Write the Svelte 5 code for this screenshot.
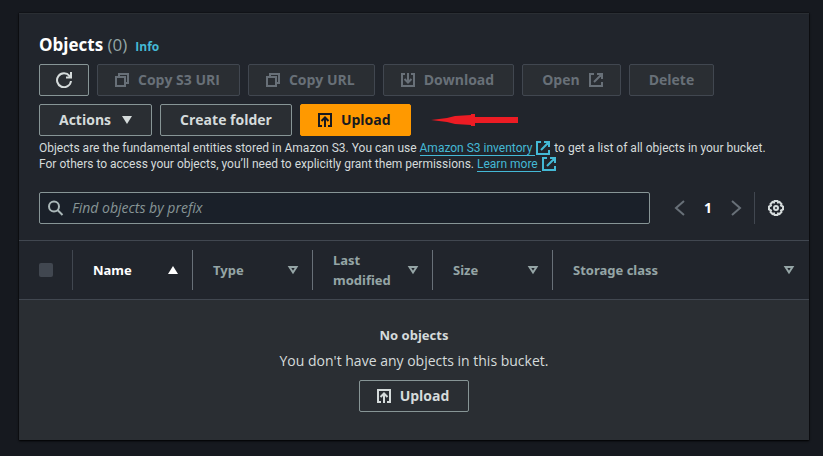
<script>
  let query = $state('');
  const columns = [
    { label: 'Name', sorted: true },
    { label: 'Type' },
    { label: 'Last modified' },
    { label: 'Size' },
    { label: 'Storage class' }
  ];
</script>

{#snippet copyIcon()}
  <svg class="icon" viewBox="0 0 16 16" aria-hidden="true"><path d="M2 5h9v9H2zM5 5V2h9v9h-3" /></svg>
{/snippet}
{#snippet downloadIcon()}
  <svg class="icon" viewBox="0 0 16 16" aria-hidden="true"><path d="M5 2H2v12h12V2h-3M8 1v9.500M4.500 7L8 10.500 11.500 7" /></svg>
{/snippet}
{#snippet uploadIcon()}
  <svg class="icon" viewBox="0 0 16 16" aria-hidden="true"><path d="M5 14H2V2h12v12h-3M8 15V6M4.500 9L8 5.500 11.500 9" /></svg>
{/snippet}
{#snippet externalIcon()}
  <svg class="icon" viewBox="0 0 16 16" aria-hidden="true"><path d="M6 2H2v12h12v-4M9 2h5v5M14 2L6 10" /></svg>
{/snippet}

<main>
  <section class="panel">
    <header>
      <div class="title">
        <h2>Objects <span>(0)</span></h2>
        <a class="info" href="#info">Info</a>
      </div>
      <div class="toolbar">
        <button class="btn refresh" aria-label="Refresh">
          <svg class="icon" viewBox="0 0 16 16" aria-hidden="true"><path d="M15 9A7 7 0 1 1 13.500 3.800L15 5.500M15 0v5.500h-5" /></svg>
        </button>
        <button class="btn lead" disabled>{@render copyIcon()}Copy S3 URI</button>
        <button class="btn lead" disabled>{@render copyIcon()}Copy URL</button>
        <button class="btn lead" disabled>{@render downloadIcon()}Download</button>
        <button class="btn trail" disabled>Open{@render externalIcon()}</button>
        <button class="btn" disabled>Delete</button>
        <button class="btn trail">Actions
          <svg class="icon" viewBox="0 0 16 16" aria-hidden="true"><path class="fill" d="M3 4h10l-5 8z" /></svg>
        </button>
        <button class="btn">Create folder</button>
        <button class="btn lead primary">{@render uploadIcon()}Upload</button>
        <svg class="arrow" viewBox="0 0 87 12" aria-hidden="true"><path d="M0 6L16 4 24 2 40 1V0h4v3h43v6H44v3h-4v-1L24 10 16 8z" /></svg>
      </div>
      <p class="description">
        Objects are the fundamental entities stored in Amazon S3. You can use
        <a href="#inventory"><span>Amazon S3 inventory&nbsp;</span>{@render externalIcon()}</a>
        to get a list of all objects in your bucket.<br />
        For others to access your objects, you’ll need to explicitly grant them permissions.
        <a href="#learn"><span>Learn more&nbsp;</span>{@render externalIcon()}</a>
      </p>
      <div class="filter">
        <label class="search">
          <svg class="icon" viewBox="0 0 16 16" aria-hidden="true"><circle cx="6" cy="6.500" r="5" /><path d="M9.500 10L14.500 15" /></svg>
          <input type="text" placeholder="Find objects by prefix" aria-label="Find objects by prefix" bind:value={query} />
        </label>
        <nav aria-label="Pagination">
          <button class="plain dim" aria-label="Previous page"><svg class="icon" viewBox="0 0 16 16"><path d="M12 1L4 8l8 7" /></svg></button>
          <button class="plain page">1</button>
          <button class="plain dim" aria-label="Next page"><svg class="icon" viewBox="0 0 16 16"><path d="M4 1l8 7-8 7" /></svg></button>
        </nav>
        <div class="settings">
          <button class="plain" aria-label="Preferences">
            <svg class="icon" viewBox="0 0 16 16"><path d="M6.500 1h3l.5 1.500 1.500-.5 2 2-.5 1.500 2 1v3l-2 1 .5 1.500-2 2-1.500-.5-.5 1.500h-3L6 13.500l-1.500.5-2-2 .5-1.500-2-1v-3l2-1L2.500 4l2-2 1.500.5z" /><circle cx="8" cy="8" r="2" /></svg>
          </button>
        </div>
      </div>
    </header>
    <table>
      <thead>
        <tr>
          <th class="select"><div class="cell"><input type="checkbox" disabled aria-label="Select all objects" /></div></th>
          {#each columns as column}
            <th class:sorted={column.sorted} class:last={column.label === 'Storage class'}>
              <div class="cell">
                <span>{column.label}</span>
                <svg class="icon" viewBox="0 0 16 16" aria-hidden="true">
                  {#if column.sorted}<path class="fill" d="M3 12h10L8 4z" />{:else}<path d="M4.500 5h7L8 10.500z" />{/if}
                </svg>
              </div>
            </th>
          {/each}
        </tr>
      </thead>
      <tbody>
        <tr>
          <td colspan="6">
            <div class="empty">
              <strong>No objects</strong>
              <p>You don't have any objects in this bucket.</p>
              <button class="btn lead">{@render uploadIcon()}Upload</button>
            </div>
          </td>
        </tr>
      </tbody>
    </table>
  </section>
</main>

<style>
  :global(body) { background: #16191f; }
  * { box-sizing: border-box; }
  main {
    padding: 13px 14px 16px 19px;
    color: #d5dbdb;
    font: 14px/20px "Open Sans", "Noto Sans", sans-serif;
  }
  .panel {
    background: #21252c;
    box-shadow: 0 1px 2px #000, 0 0 1px #000;
    border-top: 1px solid #2a2e33;
  }
  header { padding: 20px 20px 16px; }
  .title { display: flex; align-items: baseline; gap: 8px; height: 22px; margin-bottom: 8px; }
  h2 { margin: 0; font-size: 17px; font-weight: 700; line-height: 22px; color: #fff; }
  h2 span { font-weight: 400; color: #95a5a6; }
  a { color: #44b9d6; text-decoration: none; }
  .info { font-size: 12px; font-weight: 700; }
  .toolbar { display: flex; flex-wrap: wrap; align-items: center; gap: 8px; }
  .icon {
    width: 16px;
    height: 16px;
    flex: none;
    fill: none;
    stroke: currentColor;
    stroke-width: 2;
  }
  .fill { fill: currentColor; stroke: none; }
  .btn {
    display: inline-flex;
    align-items: center;
    justify-content: center;
    gap: 8px;
    height: 32px;
    padding: 0 19px;
    border: 1px solid #879596;
    border-radius: 2px;
    background: #2a2e33;
    color: #d5dbdb;
    font: inherit;
    font-weight: 700;
    white-space: nowrap;
  }
  .btn:disabled { border-color: #414750; color: #687078; }
  .refresh { padding: 0 16px; }
  .lead { padding-left: 16px; }
  .trail { padding-right: 16px; }
  .primary { border-color: #ff9900; background: #ff9900; color: #16191f; }
  .arrow { width: 87px; height: 12px; margin-left: 12px; fill: #ed1c24; }
  .description { margin: 4px 0 20px; font-family: Roboto, "Open Sans", sans-serif; font-size: 12px; line-height: 16px; }
  .description a { white-space: nowrap; }
  .description a span { border-bottom: 1px solid; }
  .description .icon { vertical-align: top; }
  .filter { display: flex; align-items: center; }
  .search {
    display: flex;
    align-items: center;
    flex: 1;
    gap: 8px;
    height: 32px;
    padding: 0 8px;
    border: 1px solid #879596;
    border-radius: 2px;
    background: #1a2029;
  }
  .search .icon { color: #aab7b8; }
  .search input {
    flex: 1;
    min-width: 0;
    padding: 0;
    border: 0;
    outline: 0;
    background: none;
    color: #d5dbdb;
    font: inherit;
  }
  .search input::placeholder { color: #879596; font-style: italic; opacity: 1; }
  nav { display: flex; gap: 12px; margin: 0 10px 0 22px; }
  .plain {
    display: flex;
    align-items: center;
    justify-content: center;
    width: 16px;
    height: 20px;
    padding: 0;
    border: 0;
    background: none;
    color: #d5dbdb;
    font: inherit;
  }
  .dim { color: #687078; }
  .page { color: #fff; font-weight: 700; }
  .settings { display: flex; align-items: center; height: 32px; padding: 0 5px 0 13px; border-left: 1px solid #414750; }
  table { width: 100%; table-layout: fixed; border-collapse: separate; border-spacing: 0; }
  th {
    width: 120px;
    padding: 9px 0;
    border: solid #414750;
    border-width: 1px 0;
    color: #95a5a6;
    text-align: left;
  }
  th, strong { font-family: "Noto Sans", "Open Sans", sans-serif; font-size: 13px; font-weight: 700; }
  .select { width: 54px; }
  .last { width: auto; }
  .cell {
    display: flex;
    align-items: center;
    justify-content: space-between;
    gap: 8px;
    height: 40px;
    padding: 0 11px 0 20px;
    border-right: 1px solid #687078;
  }
  .select .cell { border-color: #414750; }
  .last .cell { padding-right: 12px; border: 0; }
  .sorted { color: #fff; }
  input[type='checkbox'] {
    appearance: none;
    flex: none;
    width: 14px;
    height: 14px;
    margin: 0;
    border-radius: 2px;
    background: #414750;
  }
  td { padding: 0; background: #2a2e33; }
  .empty { display: flex; flex-direction: column; align-items: center; padding: 25px 20px 28px; }
  .empty p { margin: 6px 0 9px; }
</style>
